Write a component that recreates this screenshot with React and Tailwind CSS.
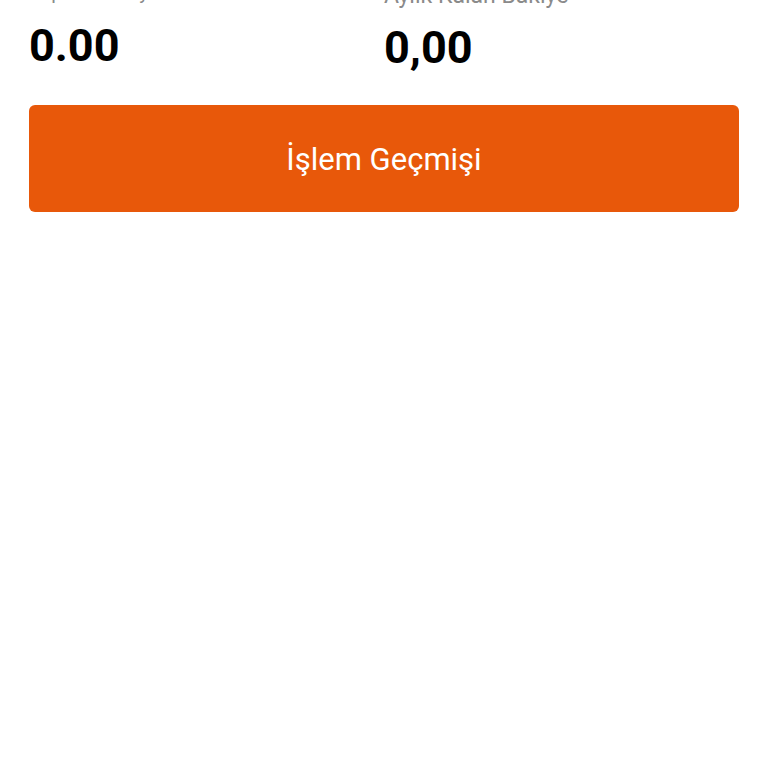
export default function App() {
  return (
    <div className="w-[768px] h-[768px] bg-white overflow-hidden font-['Roboto',sans-serif]">
      <div className="px-[29px] -mt-[15px]">
        <div className="grid grid-cols-2">
          <div>
            <div className="text-[20px] leading-[24px] text-[#8a8a8a] -mt-[5px]">Toplam Bakiye</div>
            <div className="text-[45px] leading-[54px] font-bold text-black mt-[15px]">0.00</div>
          </div>
          <div>
            <div className="text-[23px] leading-[24px] text-[#8a8a8a] -mt-[1px]">Aylık Kalan Bakiye</div>
            <div className="text-[45px] leading-[54px] font-bold text-black mt-[13px]">0,00</div>
          </div>
        </div>
        <button className="mt-[30px] w-full h-[107px] rounded-[6px] bg-[#e8580a] text-white text-[31px] pt-[4px]">
          İşlem Geçmişi
        </button>
      </div>
    </div>
  );
}
